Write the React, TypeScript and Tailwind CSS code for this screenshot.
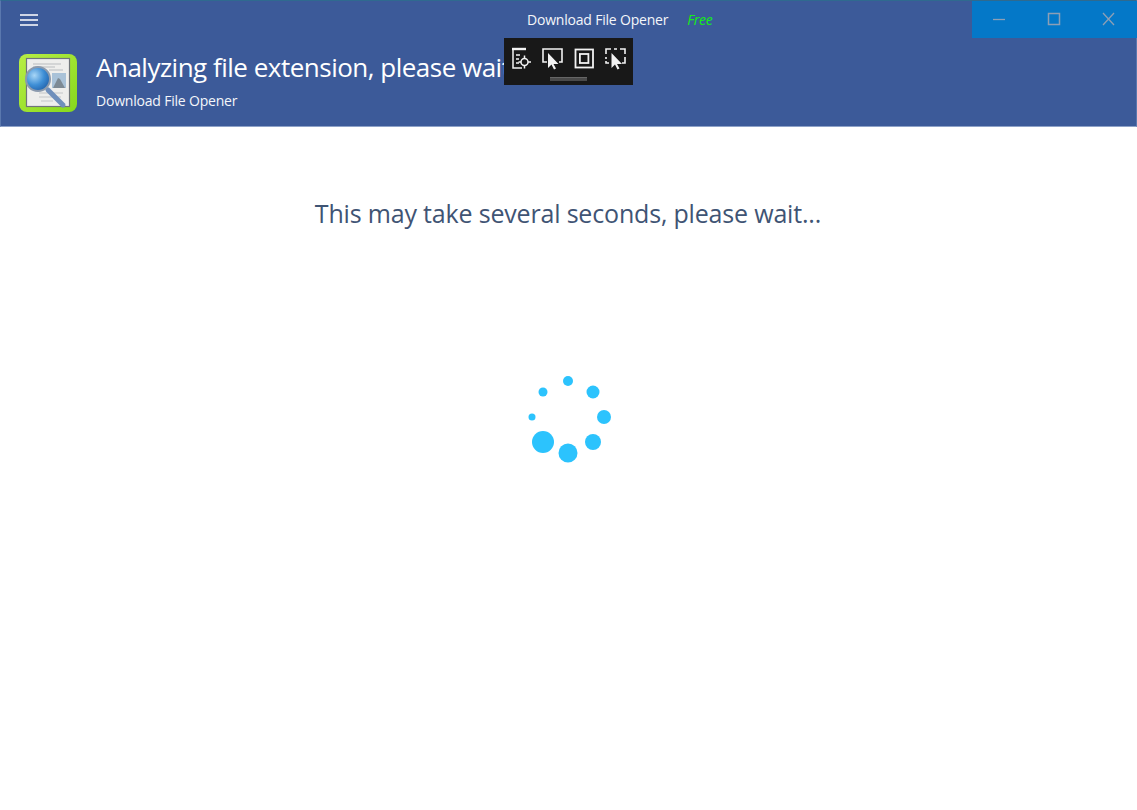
import React from "react";

function DocIcon() {
  return (
    <svg width="58" height="58" viewBox="0 0 58 58" className="block">
      <defs>
        <linearGradient id="g" x1="0" y1="0" x2="1" y2="1">
          <stop offset="0" stopColor="#b8ee45" />
          <stop offset="1" stopColor="#86d81c" />
        </linearGradient>
        <radialGradient id="l" cx="0.35" cy="0.35" r="0.8">
          <stop offset="0" stopColor="#a8d6f6" />
          <stop offset="0.5" stopColor="#3f8fd6" />
          <stop offset="1" stopColor="#1a56a0" />
        </radialGradient>
      </defs>
      <rect x="0" y="0" width="58" height="58" rx="8" fill="url(#g)" />
      <rect x="7.500" y="4.500" width="43" height="48" fill="#eeeeec" stroke="#70757a" strokeWidth="1.200" />
      <path d="M14 10h28M14 13h22M30 16h14" stroke="#b9bcbf" strokeWidth="1" />
      <rect x="33" y="19" width="14" height="15" fill="#a9c2d8" />
      <path d="M34 34l5-10 2 1 5 9z" fill="#7d8a94" />
      <path d="M20 39h24M20 43h22M22 47h12" stroke="#c4c6c8" strokeWidth="1" />
      <path d="M29 36l15 15" stroke="#6f8fbb" strokeWidth="5" strokeLinecap="round" />
      <circle cx="19" cy="25" r="12" fill="url(#l)" stroke="#8b9aad" strokeWidth="2" />
    </svg>
  );
}

function Toolbar() {
  return (
    <div className="absolute left-[504px] top-[38px] w-[129px] h-[47px] bg-[#181818] flex flex-col items-center">
      <svg width="129" height="37" viewBox="0 0 129 37" fill="none" stroke="#f2f2f2" strokeWidth="1.500" className="block">
        <path d="M8 11h14" strokeWidth="2.400" />
        <path d="M9 11v19h9" />
        <path d="M12 17h4M12 21h3M12 25h3" />
        <circle cx="20.500" cy="24" r="3.500" />
        <path d="M20.500 17.500v3M20.500 27.500v3M14.500 24h2.500M24 24h3" />
        <path d="M43 24h-4v-13h19v13h-3" strokeWidth="1.600" />
        <path d="M44 15v15l3.500-3.500 2.500 5 2-1-2.500-4.500h5z" fill="#f2f2f2" stroke="none" />
        <rect x="71.500" y="11.500" width="17.500" height="18" strokeWidth="1.800" />
        <rect x="75.900" y="16" width="8.500" height="9" strokeWidth="1.800" />
        <path d="M102 16v-5h5M110 11h3M116 11h5v5M121 19v6h-3M102 19v2M102 23v2h3" strokeWidth="1.600" />
        <path d="M107.500 15v15l3.500-3.500 2.500 5 2-1-2.500-4.500h5z" fill="#f2f2f2" stroke="none" />
      </svg>
      <div className="mt-[2px] w-[37px] h-[4px] bg-[#4a4a4a] border-t border-[#666666]" />
    </div>
  );
}

function Spinner() {
  const dots = [
    [36, 5, 5], [61, 16, 6.500], [72, 41, 7], [61, 66, 8], [36, 77, 9.500], [11, 66, 11], [0, 41, 3.500], [11, 16, 4.500],
  ];
  return (
    <svg width="100" height="100" viewBox="-14 -7 100 100" className="block">
      {dots.map(([x, y, r], i) => (
        <circle key={i} cx={x} cy={y} r={r} fill="#2cc3fd" />
      ))}
    </svg>
  );
}

export default function App() {
  return (
    <div className="relative w-[1137px] h-[810px] bg-white overflow-hidden font-['Open_Sans','Noto_Sans',sans-serif]">
      <header className="h-[127px] bg-[#3c5a99] border-t border-t-[#2f6a8f] border-x border-x-[#5a78ae] border-b border-b-[#8ea2c8] text-white">
        <div className="relative flex h-[37px] items-center">
          <svg width="18" height="12" viewBox="0 0 18 12" className="ml-[19px] mt-[1px] block" stroke="#ffffff" strokeWidth="1.300">
            <path d="M0 1h18M0 6h18M0 11h18" />
          </svg>
          <div className="ml-[489px] flex items-center text-[14px] tracking-[-0.200px]">
            <span className="text-[#f4f6fa]">Download File Opener</span>
            <span className="ml-[19px] italic text-[#14f014]">Free</span>
          </div>
          <div className="absolute -right-px top-0 flex h-[37px] w-[165px] items-center bg-[#0478c8]">
            <svg width="165" height="37" viewBox="0 0 165 37" fill="none" stroke="#8d9fb5" strokeWidth="1.300" className="block">
              <path d="M21 18.500h12" />
              <rect x="76.500" y="12.500" width="11" height="11" strokeWidth="1.500" />
              <path d="M131 12l11 12M142 12l-11 12" />
            </svg>
          </div>
        </div>
        <div className="flex items-start pl-[18px] pt-[16px]">
          <DocIcon />
          <div className="ml-[19px] -mt-[5px] min-w-0">
            <div className="text-[26px] leading-[36px] tracking-[-0.500px] whitespace-nowrap">Analyzing file extension, please wait...</div>
            <div className="mt-[6px] text-[14px] leading-[20px] tracking-[-0.200px] text-[#f4f6fa]">Download File Opener</div>
          </div>
        </div>
      </header>
      <Toolbar />
      <main className="flex flex-col items-center">
        <h1 className="mt-[66px] -ml-[1px] text-[25px] leading-[40px] font-normal text-[#3f5474] tracking-[-0.180px]">This may take several seconds, please wait...</h1>
        <div className="mt-[136px] -ml-[1px]">
          <Spinner />
        </div>
      </main>
    </div>
  );
}
